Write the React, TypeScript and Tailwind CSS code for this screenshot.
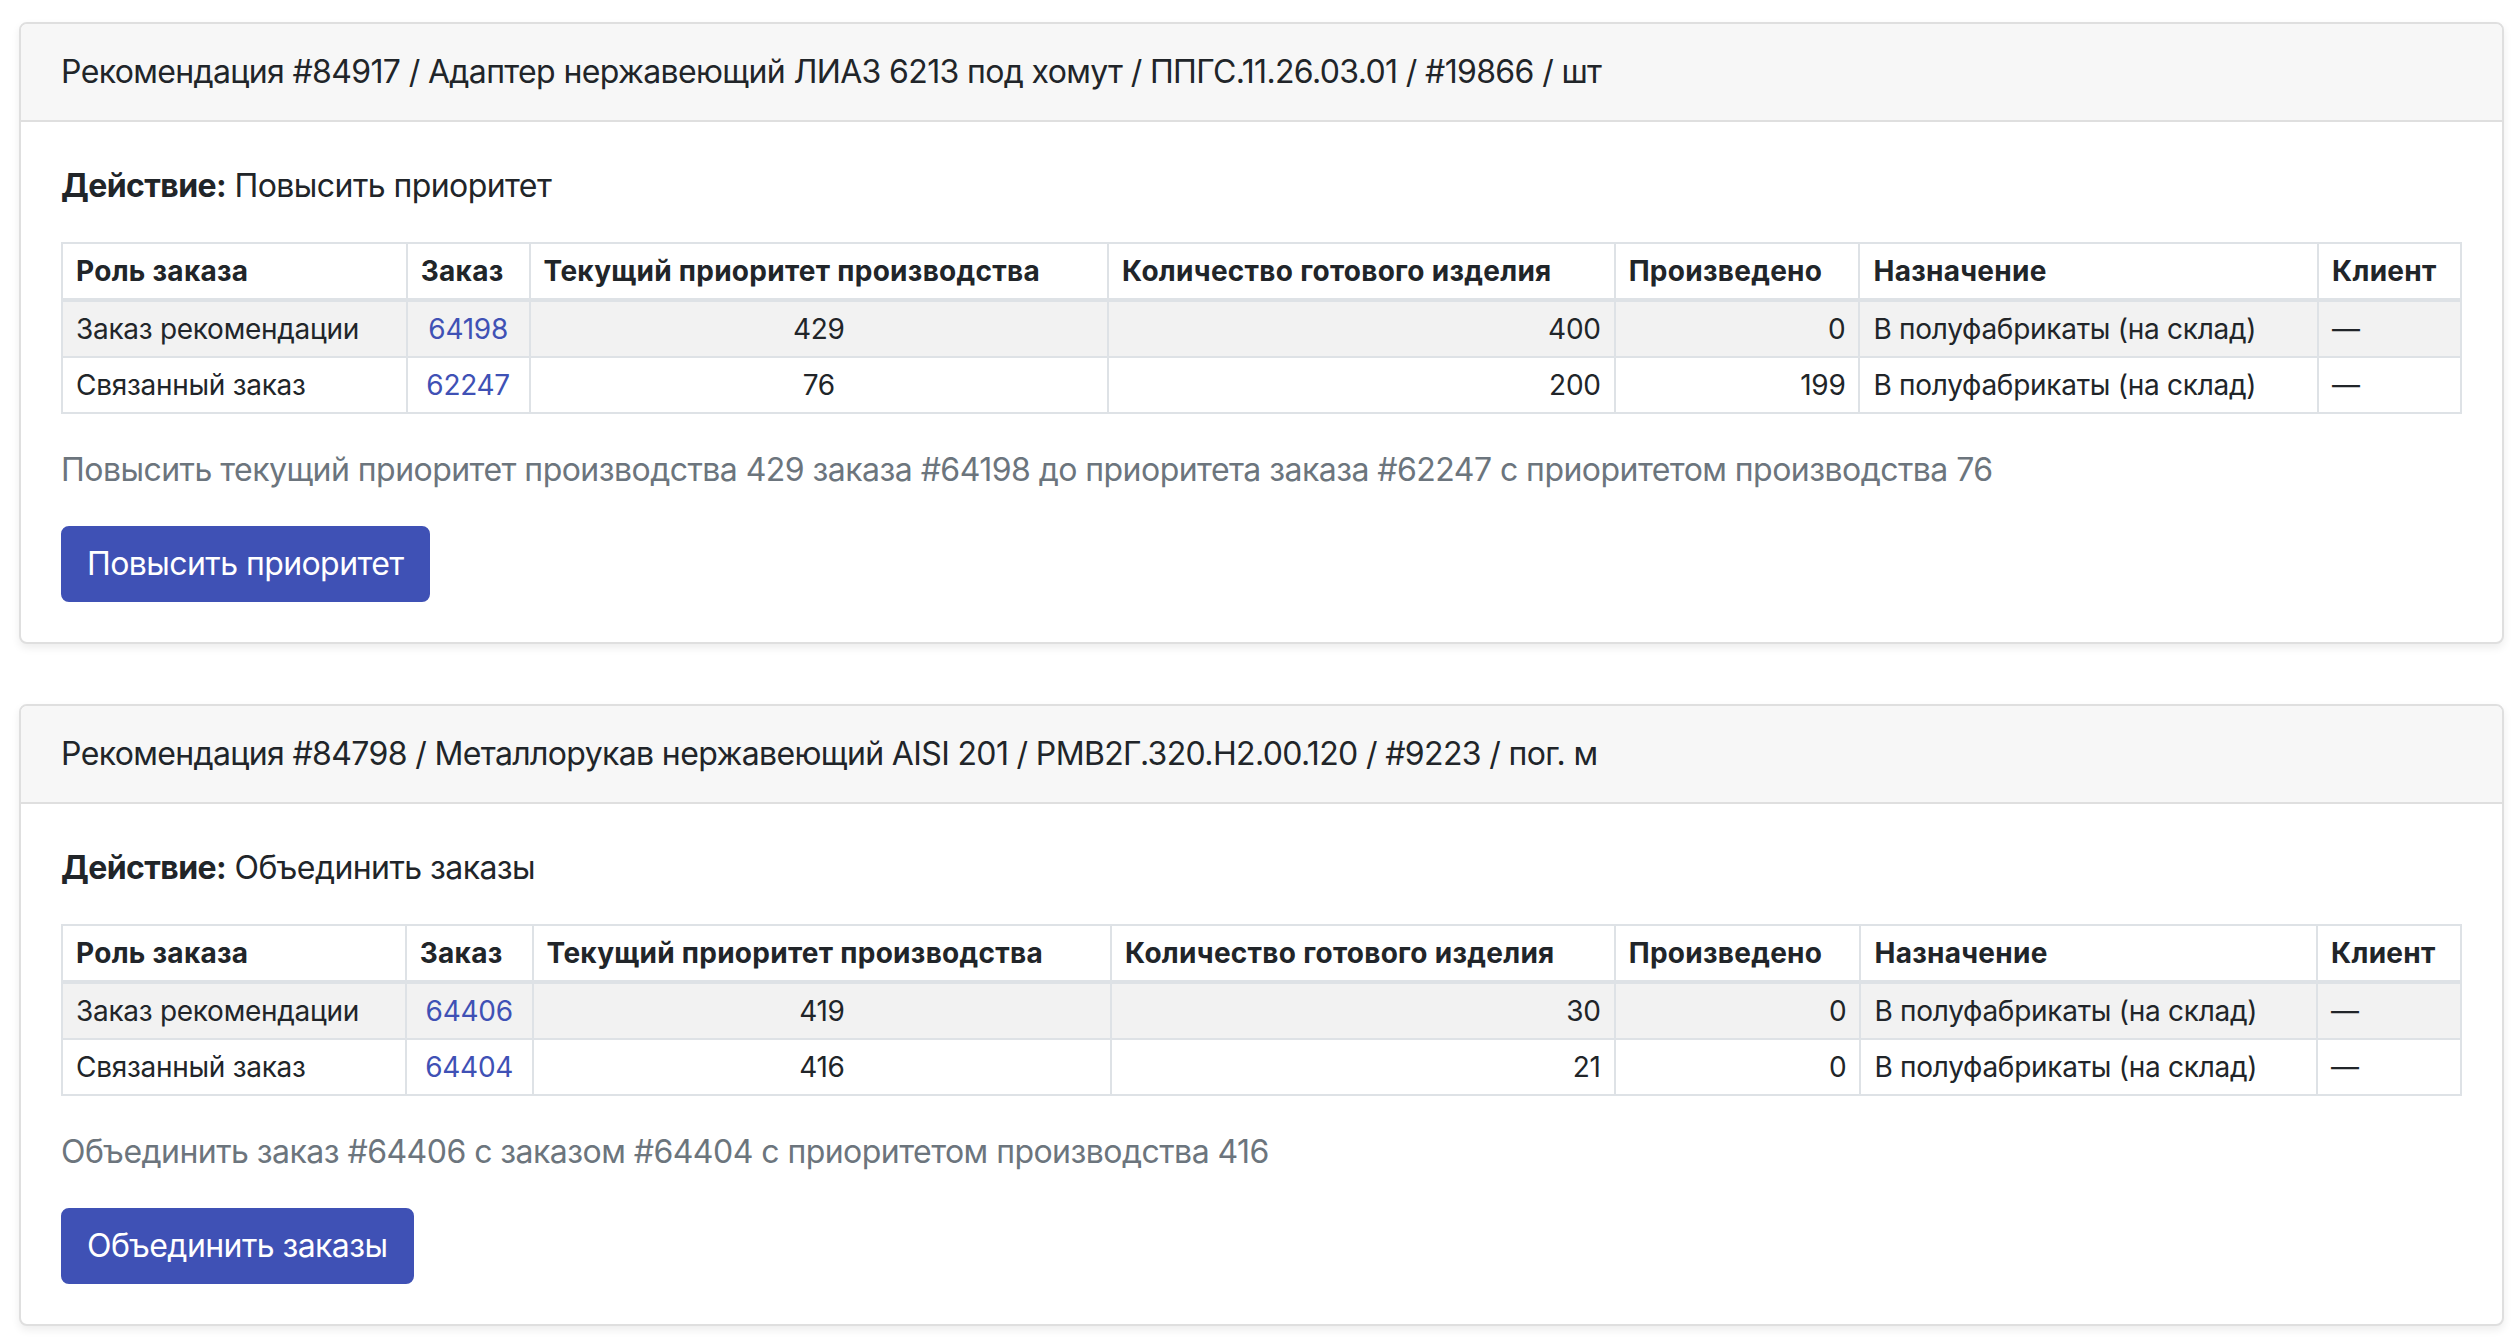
import React from "react";

type Row = {
  role: string;
  order: string;
  priority: string;
  qty: string;
  made: string;
  dest: string;
  client: string;
};

type Recommendation = {
  title: string;
  action: string;
  note: string;
  button: string;
  cols: number[];
  rows: Row[];
};

const recommendations: Recommendation[] = [
  {
    title:
      "Рекомендация #84917 / Адаптер нержавеющий ЛИАЗ 6213 под хомут / ППГС.11.26.03.01 / #19866 / шт",
    action: "Повысить приоритет",
    note: "Повысить текущий приоритет производства 429 заказа #64198 до приоритета заказа #62247 с приоритетом производства 76",
    button: "Повысить приоритет",
    cols: [345, 123, 579, 507, 245, 459, 143],
    rows: [
      { role: "Заказ рекомендации", order: "64198", priority: "429", qty: "400", made: "0", dest: "В полуфабрикаты (на склад)", client: "—" },
      { role: "Связанный заказ", order: "62247", priority: "76", qty: "200", made: "199", dest: "В полуфабрикаты (на склад)", client: "—" },
    ],
  },
  {
    title:
      "Рекомендация #84798 / Металлорукав нержавеющий AISI 201 / РМВ2Г.320.Н2.00.120 / #9223 / пог. м",
    action: "Объединить заказы",
    note: "Объединить заказ #64406 с заказом #64404 с приоритетом производства 416",
    button: "Объединить заказы",
    cols: [344, 127, 579, 504, 246, 457, 144],
    rows: [
      { role: "Заказ рекомендации", order: "64406", priority: "419", qty: "30", made: "0", dest: "В полуфабрикаты (на склад)", client: "—" },
      { role: "Связанный заказ", order: "64404", priority: "416", qty: "21", made: "0", dest: "В полуфабрикаты (на склад)", client: "—" },
    ],
  },
];

const headers = [
  "Роль заказа",
  "Заказ",
  "Текущий приоритет производства",
  "Количество готового изделия",
  "Произведено",
  "Назначение",
  "Клиент",
];

const OrdersTable = ({ cols, rows }: { cols: number[]; rows: Row[] }) => (
  <table className="w-full border-collapse border-2 border-[#dee2e6] text-[28px] leading-[48px] tracking-[-0.01em]">
    <colgroup>
      {cols.map((w, i) => (
        <col key={i} style={{ width: w }} />
      ))}
    </colgroup>
    <thead>
      <tr>
        {headers.map((h) => (
          <th
            key={h}
            className="border-2 border-b-4 border-[#dee2e6] px-[13px] py-[3px] text-left font-bold tracking-[0.01em] whitespace-nowrap"
          >
            {h}
          </th>
        ))}
      </tr>
    </thead>
    <tbody>
      {rows.map((r, i) => (
        <tr key={r.order} className={i % 2 === 0 ? "bg-[#f2f2f2]" : "bg-white"}>
          <td className="border-2 border-[#dee2e6] px-[13px] py-[3px] whitespace-nowrap">{r.role}</td>
          <td className="border-2 border-[#dee2e6] px-[13px] py-[3px] text-center">
            <a href="#" className="text-[#3f51b5]">
              {r.order}
            </a>
          </td>
          <td className="border-2 border-[#dee2e6] px-[13px] py-[3px] text-center">{r.priority}</td>
          <td className="border-2 border-[#dee2e6] px-[13px] py-[3px] text-right">{r.qty}</td>
          <td className="border-2 border-[#dee2e6] px-[13px] py-[3px] text-right">{r.made}</td>
          <td className="border-2 border-[#dee2e6] px-[13px] py-[3px] whitespace-nowrap">{r.dest}</td>
          <td className="border-2 border-[#dee2e6] px-[13px] py-[3px]">{r.client}</td>
        </tr>
      ))}
    </tbody>
  </table>
);

const RecommendationCard = ({ rec }: { rec: Recommendation }) => (
  <div className="mb-[60px] rounded-[8px] border-2 border-[#dfdfdf] bg-white shadow-[0_4px_8px_rgba(0,0,0,0.075)]">
    <div className="rounded-t-[6px] border-b-2 border-[#dfdfdf] bg-[#f7f7f7] px-[40px] py-[24px] text-[32px] leading-[48px] tracking-[-0.02em]">
      {rec.title}
    </div>
    <div className="p-[40px]">
      <div className="mb-[32px] text-[32px] leading-[48px] tracking-[-0.018em]">
        <span className="font-bold">Действие:</span> {rec.action}
      </div>
      <OrdersTable cols={rec.cols} rows={rec.rows} />
      <p className="my-[32px] text-[32px] leading-[48px] tracking-[-0.017em] text-[#6c757d]">{rec.note}</p>
      <button
        type="button"
        className="rounded-[8px] border-2 border-[#3f51b5] bg-[#3f51b5] px-[24px] py-[12px] text-[32px] leading-[48px] tracking-[-0.018em] text-white"
      >
        {rec.button}
      </button>
    </div>
  </div>
);

export default function App() {
  return (
    <div className="min-h-screen bg-white pl-[19px] pr-[16px] pt-[22px] font-['Inter','Liberation_Sans',sans-serif] text-[#212529]">
      {recommendations.map((rec) => (
        <RecommendationCard key={rec.title} rec={rec} />
      ))}
    </div>
  );
}
